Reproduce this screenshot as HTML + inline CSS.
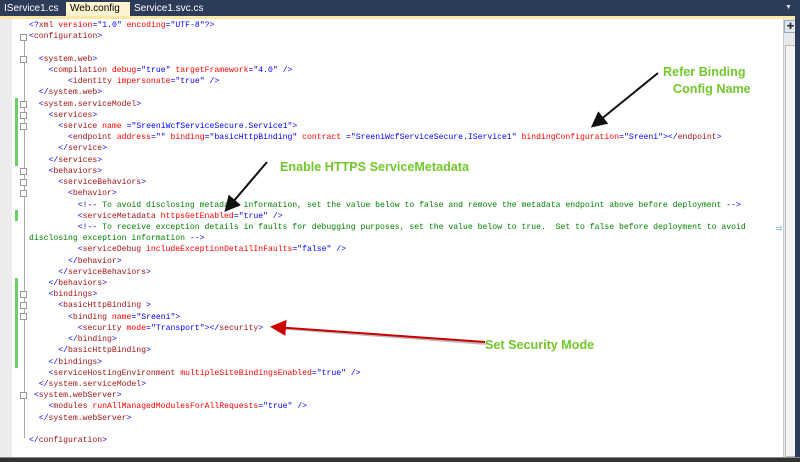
<!DOCTYPE html>
<html><head><meta charset="utf-8"><style>
body{margin:0;width:800px;height:461px;overflow:hidden;background:#fff;position:relative;font-family:"Liberation Sans",sans-serif}
#tabs{position:absolute;left:0;top:0;width:800px;height:16px;background:#2b3b58}
#ystrip{position:absolute;left:0;top:16px;width:795px;height:3px;background:#fbe8a6}
.tab{position:absolute;top:2px;height:14px;font-size:10px;line-height:14px;color:#fff;padding-left:4px}
#editor{position:absolute;left:0;top:19px;width:783px;height:438px;background:#fff}
#gut{position:absolute;left:0;top:19px;width:12px;height:438px;background:#ececec}
#vs{position:absolute;left:783px;top:19px;width:12px;height:438px;background:#e9e9e9;border-left:1px solid #ccc}
#rb{position:absolute;left:795px;top:0;width:5px;height:461px;background:#2b3b58}
#bb{position:absolute;left:0;top:457px;width:800px;height:4px;background:#333;border-top:1px solid #888}
#code{position:absolute;left:29px;top:20px;font-family:"Liberation Mono",monospace;font-size:8.15px;line-height:11.22px;white-space:pre;color:#00f}
.t{color:#a31515}.a{color:#f00}.c{color:#008000}
.g{position:absolute;left:15px;width:3px;background:#6ad16a}
.bx{position:absolute;left:20px;width:5px;height:5px;border:1px solid #999;background:#fff}
.lbl{position:absolute;font-weight:bold;font-size:12.6px;color:#72c82a;white-space:nowrap}
</style></head><body>
<div id="tabs"></div>
<div class="tab" style="left:0">IService1.cs</div>
<div class="tab" style="left:66px;width:60px;background:#fdf3cf;color:#000;height:17px">Web.config <span style="color:#555">✕</span></div>
<div class="tab" style="left:130px">Service1.svc.cs</div>
<div style="position:absolute;left:785px;top:4px;color:#ddd;font-size:7px">▼</div>
<div id="editor"></div>
<div id="ystrip"></div>
<div id="gut"></div>
<div style="position:absolute;left:24px;top:40px;width:1px;height:398px;background:#aaa"></div>
<div class="g" style="top:98px;height:68px"></div>
<div class="g" style="top:210px;height:11px"></div>
<div class="g" style="top:278px;height:90px"></div>
<div class="bx" style="top:34px"></div><div class="bx" style="top:56px"></div>
<div class="bx" style="top:101px"></div><div class="bx" style="top:112px"></div><div class="bx" style="top:123px"></div>
<div class="bx" style="top:168px"></div><div class="bx" style="top:179px"></div><div class="bx" style="top:190px"></div>
<div class="bx" style="top:291px"></div><div class="bx" style="top:302px"></div><div class="bx" style="top:313px"></div>
<div class="bx" style="top:392px"></div>
<div id="code">&lt;?<span class="t">xml</span> <span class="a">version</span>="1.0" <span class="a">encoding</span>="UTF-8"?&gt;
&lt;<span class="t">configuration</span>&gt;

  &lt;<span class="t">system.web</span>&gt;
    &lt;<span class="t">compilation</span> <span class="a">debug</span>="true" <span class="a">targetFramework</span>="4.0" /&gt;
        &lt;<span class="t">identity</span> <span class="a">impersonate</span>="true" /&gt;
  &lt;/<span class="t">system.web</span>&gt;
  &lt;<span class="t">system.serviceModel</span>&gt;
    &lt;<span class="t">services</span>&gt;
      &lt;<span class="t">service</span> <span class="a">name</span> ="SreeniWcfServiceSecure.Service1"&gt;
        &lt;<span class="t">endpoint</span> <span class="a">address</span>="" <span class="a">binding</span>="basicHttpBinding" <span class="a">contract</span> ="SreeniWcfServiceSecure.IService1" <span class="a">bindingConfiguration</span>="Sreeni"&gt;&lt;/<span class="t">endpoint</span>&gt;
      &lt;/<span class="t">service</span>&gt;
    &lt;/<span class="t">services</span>&gt;
    &lt;<span class="t">behaviors</span>&gt;
      &lt;<span class="t">serviceBehaviors</span>&gt;
        &lt;<span class="t">behavior</span>&gt;
          &lt;!--<span class="c"> To avoid disclosing metadata information, set the value below to false and remove the metadata endpoint above before deployment </span>--&gt;
          &lt;<span class="t">serviceMetadata</span> <span class="a">httpsGetEnabled</span>="true" /&gt;
          &lt;!--<span class="c"> To receive exception details in faults for debugging purposes, set the value below to true.  Set to false before deployment to avoid</span>
<span class="c">disclosing exception information </span>--&gt;
          &lt;<span class="t">serviceDebug</span> <span class="a">includeExceptionDetailInFaults</span>="false" /&gt;
        &lt;/<span class="t">behavior</span>&gt;
      &lt;/<span class="t">serviceBehaviors</span>&gt;
    &lt;/<span class="t">behaviors</span>&gt;
    &lt;<span class="t">bindings</span>&gt;
      &lt;<span class="t">basicHttpBinding</span> &gt;
        &lt;<span class="t">binding</span> <span class="a">name</span>="Sreeni"&gt;
          &lt;<span class="t">security</span> <span class="a">mode</span>="Transport"&gt;&lt;/<span class="t">security</span>&gt;
        &lt;/<span class="t">binding</span>&gt;
      &lt;/<span class="t">basicHttpBinding</span>&gt;
    &lt;/<span class="t">bindings</span>&gt;
    &lt;<span class="t">serviceHostingEnvironment</span> <span class="a">multipleSiteBindingsEnabled</span>="true" /&gt;
  &lt;/<span class="t">system.serviceModel</span>&gt;
 &lt;<span class="t">system.webServer</span>&gt;
    &lt;<span class="t">modules</span> <span class="a">runAllManagedModulesForAllRequests</span>="true" /&gt;
  &lt;/<span class="t">system.webServer</span>&gt;

&lt;/<span class="t">configuration</span>&gt;</div>
<div style="position:absolute;left:776px;top:223px;color:#39c;font-size:8px">⥤</div>
<div id="vs"></div>
<div style="position:absolute;left:784px;top:20px;width:11px;height:11px;background:#dfe6ef;border:1px solid #9ab;font-size:9px;line-height:10px;text-align:center;color:#333">✚</div>
<div style="position:absolute;left:785px;top:45px;width:10px;height:410px;background:#f4f4f4;border:1px solid #bbb"></div>
<div id="rb"></div><div id="bb"></div>
<svg style="position:absolute;left:0;top:0" width="800" height="461">
<defs><marker id="ak" markerWidth="8" markerHeight="8" refX="6" refY="4" orient="auto"><path d="M0,0 L8,4 L0,8 z" fill="#111"/></marker>
<marker id="ar" markerWidth="8" markerHeight="8" refX="6" refY="4" orient="auto"><path d="M0,0 L8,4 L0,8 z" fill="#c00"/></marker></defs>
<line x1="658" y1="73" x2="594" y2="125" stroke="#111" stroke-width="2" marker-end="url(#ak)"/>
<line x1="267" y1="162" x2="227" y2="209" stroke="#111" stroke-width="2" marker-end="url(#ak)"/>
<line x1="486" y1="344" x2="276" y2="328" stroke="#bbb" stroke-width="2"/>
<line x1="485" y1="342" x2="274" y2="327" stroke="#c00" stroke-width="2" marker-end="url(#ar)"/>
</svg>
<div class="lbl" style="left:663px;top:65px">Refer Binding</div>
<div class="lbl" style="left:673px;top:82px">Config Name</div>
<div class="lbl" style="left:280px;top:160px">Enable HTTPS ServiceMetadata</div>
<div class="lbl" style="left:485px;top:338px">Set Security Mode</div>
</body></html>
